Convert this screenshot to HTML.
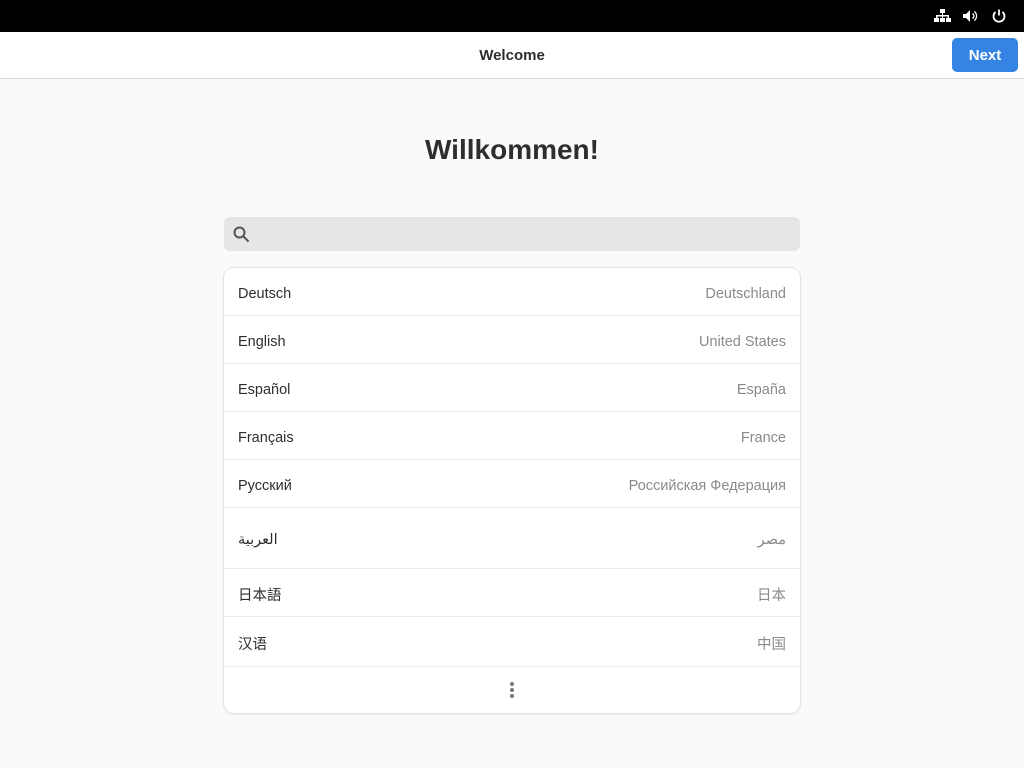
<!DOCTYPE html>
<html><head><meta charset="utf-8"><style>
*{margin:0;padding:0;box-sizing:border-box}
body{width:1024px;height:768px;background:#fafafa;font-family:"Liberation Sans","Noto Sans CJK SC",sans-serif;color:#2e2e2e;position:relative;overflow:hidden}
.top{position:absolute;left:0;top:0;width:1024px;height:32px;background:#000}
.hdr{position:absolute;left:0;top:32px;width:1024px;height:47px;background:#fff;border-bottom:1px solid #dcdcdc}
.hdr .t{position:absolute;left:0;right:0;top:15px;text-align:center;font-weight:bold;font-size:15px}
.next{position:absolute;left:952px;top:38px;width:66px;height:34px;background:#3584e4;color:#fff;border-radius:5px;font-weight:bold;font-size:15px;text-align:center;line-height:36px}
h1{position:absolute;left:0;right:0;top:134px;text-align:center;font-size:28px;font-weight:bold}
.search{position:absolute;left:224px;top:217px;width:576px;height:34px;background:#e6e6e6;border-radius:6px}
.list{position:absolute;left:224px;top:268px;width:576px;height:445px;background:#fff;border-radius:10px;box-shadow:0 0 0 1px #e2e2e2,0 1px 3px rgba(0,0,0,.1);overflow:hidden}
.row{position:relative;border-bottom:1px solid #ebebeb;font-size:14.5px}
.row .l{position:absolute;left:14px}
.row .r{position:absolute;right:14px;color:#8a8a8a}
</style></head><body>
<div class="top">
<svg style="position:absolute;left:934px;top:8px" width="17" height="16" viewBox="0 0 17 16" fill="#fff"><rect x="6" y="1" width="5" height="4"/><rect x="8" y="5" width="1" height="3"/><rect x="2" y="7" width="13" height="1.5"/><rect x="2" y="7" width="1.5" height="4"/><rect x="13.5" y="7" width="1.5" height="4"/><rect x="0" y="10" width="5" height="4"/><rect x="12" y="10" width="5" height="4"/><rect x="8" y="7" width="1" height="3"/><rect x="6" y="10" width="5" height="4"/></svg>
<svg style="position:absolute;left:962px;top:8px" width="16" height="16" viewBox="0 0 16 16"><path d="M1 6h3l4-4v12l-4-4H1z" fill="#fff"/><path d="M10.5 5.5a3 3 0 0 1 0 5M12.5 3.5a6 6 0 0 1 0 9" stroke="#fff" stroke-width="1.3" fill="none"/></svg>
<svg style="position:absolute;left:991px;top:8px" width="16" height="16" viewBox="0 0 16 16" fill="none" stroke="#fff" stroke-width="1.8"><path d="M8 1.5v6"/><path d="M4.5 4a5.5 5.5 0 1 0 7 0"/></svg>
</div>
<div class="hdr"><div class="t">Welcome</div></div>
<div class="next">Next</div>
<h1>Willkommen!</h1>
<div class="search"><svg style="position:absolute;left:9px;top:9px" width="17" height="17" viewBox="0 0 17 17" fill="none" stroke="#555" stroke-width="2"><circle cx="6.5" cy="6.5" r="5"/><path d="M10.5 10.5l5 5"/></svg></div>
<div class="list">
<div class="row" style="height:48px"><span class="l" style="top:18px">Deutsch</span><span class="r" style="top:18px">Deutschland</span></div>
<div class="row" style="height:48px"><span class="l" style="top:18px">English</span><span class="r" style="top:18px">United States</span></div>
<div class="row" style="height:48px"><span class="l" style="top:18px">Español</span><span class="r" style="top:18px">España</span></div>
<div class="row" style="height:48px"><span class="l" style="top:18px">Français</span><span class="r" style="top:18px">France</span></div>
<div class="row" style="height:48px"><span class="l" style="top:18px">Русский</span><span class="r" style="top:18px">Российская Федерация</span></div>
<div class="row" style="height:61px"><span class="l" style="top:24px">العربية</span><span class="r" style="top:24px">مصر</span></div>
<div class="row" style="height:48px"><span class="l" style="top:15px">日本語</span><span class="r" style="top:15px">日本</span></div>
<div class="row" style="height:50px"><span class="l" style="top:16px">汉语</span><span class="r" style="top:16px">中国</span></div>
<div style="position:relative;height:45px"><svg style="position:absolute;left:285px;top:14px" width="6" height="18"><circle cx="3" cy="3" r="2" fill="#777"/><circle cx="3" cy="9" r="2" fill="#777"/><circle cx="3" cy="15" r="2" fill="#777"/></svg></div>
</div>
</body></html>
